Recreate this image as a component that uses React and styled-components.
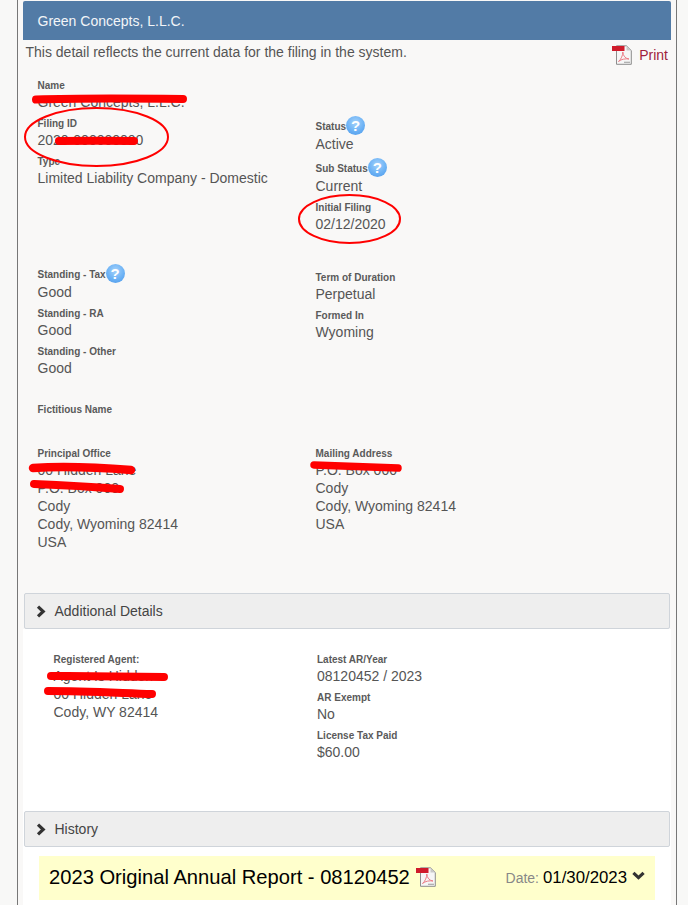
import React from 'react'
import styled, { createGlobalStyle } from 'styled-components'

const GlobalStyle = createGlobalStyle`
  html, body {
    margin: 0;
    padding: 0;
    height: 905px;
    overflow: hidden;
    background: #f8f8f7;
  }
  body {
    font-family: "Liberation Sans", Arial, sans-serif;
    font-size: 14px;
    color: #555;
  }
`
const Page = styled.div`
  position: relative;
  width: 688px;
  height: 905px;
  overflow: hidden;
`
const Sheet = styled.div`
  box-sizing: border-box;
  width: 660px;
  height: 905px;
  margin-left: 17px;
  padding: 1px 5px 0;
  background: #f9f8f7;
  border-left: 1px solid #777;
  border-right: 1px solid #777;
`
const Header = styled.div`
  box-sizing: border-box;
  height: 39px;
  padding-left: 14.5px;
  display: flex;
  align-items: center;
  background: #527ba6;
  color: #f2f5f8;
  border-radius: 2px 2px 0 0;
`
const Intro = styled.div`
  height: 39px;
  display: flex;
  justify-content: space-between;
  padding-left: 2.5px;
  line-height: 20px;
  >p{
    margin: 2px 0 0;
  }
`
const Print = styled.a`
  display: flex;
  align-items: center;
  gap: 7px;
  height: 20px;
  margin: 5px 3px 0 0;
  color: #a01c3c;
`
const Section = styled.div`
  padding-left: 14.5px;
  margin-top: ${p => p.$top || 0}px;
`
const Columns = styled.div`
  display: grid;
  grid-template-columns: ${p => p.$left || 278}px 1fr;
  padding-left: ${p => p.$indent || 14.5}px;
  margin-top: ${p => p.$top || 0}px;
`
const Column = styled.div`
  padding-top: ${p => p.$top || 0}px;
`
const Field = styled.div`
  margin-bottom: 6px;
`
const Label = styled.div`
  box-sizing: border-box;
  display: flex;
  align-items: center;
  height: ${p => (p.$help ? 18 : 14)}px;
  padding-bottom: ${p => (p.$help ? 0 : 1)}px;
  font-size: 10px;
  font-weight: bold;
  color: #5a5a5a;
`
const Value = styled.div`
  line-height: 18px;
  min-height: 18px;
`
const HelpIcon = styled.span`
  flex: none;
  width: 19px;
  height: 19px;
  margin-top: -2px;
  border-radius: 50%;
  display: flex;
  align-items: center;
  justify-content: center;
  background: radial-gradient(circle at 50% 35%, #a5d2fb 0%, #6cb2f5 55%, #4b97e8 100%);
  color: #fff;
  font-size: 15px;
  font-weight: bold;
`
const Bar = styled.div`
  box-sizing: border-box;
  height: 36px;
  margin: ${p => p.$top || 0}px 1px 0;
  padding-left: 11px;
  display: flex;
  align-items: center;
  gap: 7.5px;
  background: #eee;
  border: 1px solid #cfd4da;
  border-radius: 2px;
  color: #444;
`
const WhitePanel = styled.div`
  height: 276px;
  background: #fff;
`
const AgentColumns = styled(Columns)`
  padding-top: 23px;
  height: 159px;
  box-sizing: content-box;
  ${Field}{
    margin-bottom: 5px;
  }
  ${Label}{
    padding: 1px 0 0;
  }
  ${Value}{
    margin-top: 1px;
  }
`
const Report = styled.div`
  box-sizing: border-box;
  height: 44px;
  margin: 9px 16px 0;
  padding: 0 10px 2px;
  display: flex;
  align-items: center;
  background: #ffc;
  color: #000;
`
const ReportTitle = styled.div`
  font-size: 20.16px;
  display: flex;
  align-items: center;
  gap: 6px;
`
const ReportDate = styled.div`
  margin: 1px 0 0 auto;
  display: flex;
  align-items: center;
  gap: 4px;
  font-size: 16.8px;
  >span{
    font-size: 14px;
    color: #888;
  }
`
const ChevronDownIcon = styled.svg`
  margin: 0 0 4px 1px;
`
const Scribbles = styled.svg`
  position: absolute;
  left: 0;
  top: 0;
  pointer-events: none;
`

const PdfIcon = () => (
  <svg width="20" height="20" viewBox="0 0 20 20">
    <path d="M4.5 .8H14.5L19.3 5.5V19.3H4.5Z" fill="#f6f6f6" stroke="#8d8d8d" strokeWidth="1" />
    <path d="M14.5 .8V5.5H19.3Z" fill="#c9c9c9" />
    <rect x="0" y="1" width="12.5" height="5" fill="#cf1b2b" />
    <path d="M6.5 16.5C9 14.5 11 10 10.8 7C11 11 13.5 13.5 17 14C13.5 13.5 9.5 14 6.5 16.5Z" fill="none" stroke="#ec7d86" strokeWidth="1" />
    <rect x="12" y="16.7" width="6" height="1.2" fill="#aaa" />
  </svg>
)
const ChevronRight = () => (
  <svg width="11" height="13" viewBox="0 0 11 13">
    <path d="M2 1.6L7.2 6.5L2 11.4" fill="none" stroke="#333" strokeWidth="3.2" />
  </svg>
)
const ChevronDown = () => (
  <ChevronDownIcon width="13" height="10" viewBox="0 0 13 10">
    <path d="M1.4 1.8L6.5 6.6L11.6 1.8" fill="none" stroke="#333" strokeWidth="3.2" />
  </ChevronDownIcon>
)

const Item = ({ label, help, children }) => (
  <Field>
    <Label $help={help}>{label}{help && <HelpIcon>?</HelpIcon>}</Label>
    <Value>{children}</Value>
  </Field>
)

const App = () => {
  return (
    <Page>
      <GlobalStyle />
      <Sheet>
        <Header>Green Concepts, L.L.C.</Header>
        <Intro>
          <p>This detail reflects the current data for the filing in the system.</p>
          <Print><PdfIcon />Print</Print>
        </Intro>
        <Section>
          <Item label="Name">Green Concepts, L.L.C.</Item>
        </Section>
        <Columns>
          <Column>
            <Item label="Filing ID">2020-000000000</Item>
            <Item label="Type">Limited Liability Company - Domestic</Item>
          </Column>
          <Column>
            <Item label="Status" help>Active</Item>
            <Item label="Sub Status" help>Current</Item>
            <Item label="Initial Filing">02/12/2020</Item>
          </Column>
        </Columns>
        <Columns $top={26}>
          <Column>
            <Item label="Standing - Tax" help>Good</Item>
            <Item label="Standing - RA">Good</Item>
            <Item label="Standing - Other">Good</Item>
          </Column>
          <Column $top={6}>
            <Item label="Term of Duration">Perpetual</Item>
            <Item label="Formed In">Wyoming</Item>
          </Column>
        </Columns>
        <Section $top={20}>
          <Label>Fictitious Name</Label>
        </Section>
        <Columns $top={30}>
          <Column>
            <Item label="Principal Office">
              00 Hidden Lane<br />P.O. Box 000<br />Cody<br />Cody, Wyoming 82414<br />USA
            </Item>
          </Column>
          <Column>
            <Item label="Mailing Address">
              P.O. Box 000<br />Cody<br />Cody, Wyoming 82414<br />USA
            </Item>
          </Column>
        </Columns>
        <Bar $top={36}><ChevronRight />Additional Details</Bar>
        <WhitePanel>
          <AgentColumns $left={263.5} $indent={30.5}>
            <Column>
              <Item label="Registered Agent:">
                Agent Is Hidden<br />00 Hidden Lane<br />Cody, WY 82414
              </Item>
            </Column>
            <Column>
              <Item label="Latest AR/Year">08120452 / 2023</Item>
              <Item label="AR Exempt">No</Item>
              <Item label="License Tax Paid">$60.00</Item>
            </Column>
          </AgentColumns>
          <Bar><ChevronRight />History</Bar>
          <Report>
            <ReportTitle>2023 Original Annual Report - 08120452 <PdfIcon /></ReportTitle>
            <ReportDate><span>Date:</span> 01/30/2023 <ChevronDown /></ReportDate>
          </Report>
        </WhitePanel>
      </Sheet>
      <Scribbles width="688" height="905" viewBox="0 0 688 905" fill="none" stroke="#f00" strokeLinecap="round">
        <path d="M36 99.5C80 98 140 98.5 183 99" strokeWidth="8" />
        <path d="M59 141C85 140.5 110 140.5 134 141" strokeWidth="8" />
        <path d="M33 468C65 466 105 468 131 470" strokeWidth="8.5" />
        <path d="M34 484C60 485 95 487 120 489" strokeWidth="8" />
        <path d="M314 465C345 466 375 467 398 468" strokeWidth="7.5" />
        <path d="M51 676C90 676 130 677 164 677" strokeWidth="8" />
        <path d="M48 691C85 691 120 693 152 694" strokeWidth="8" />
        <ellipse cx="96.5" cy="137" rx="71.5" ry="29" strokeWidth="2" />
        <ellipse cx="349.5" cy="219" rx="50.5" ry="24" strokeWidth="2" />
      </Scribbles>
    </Page>
  )
}

export default App
